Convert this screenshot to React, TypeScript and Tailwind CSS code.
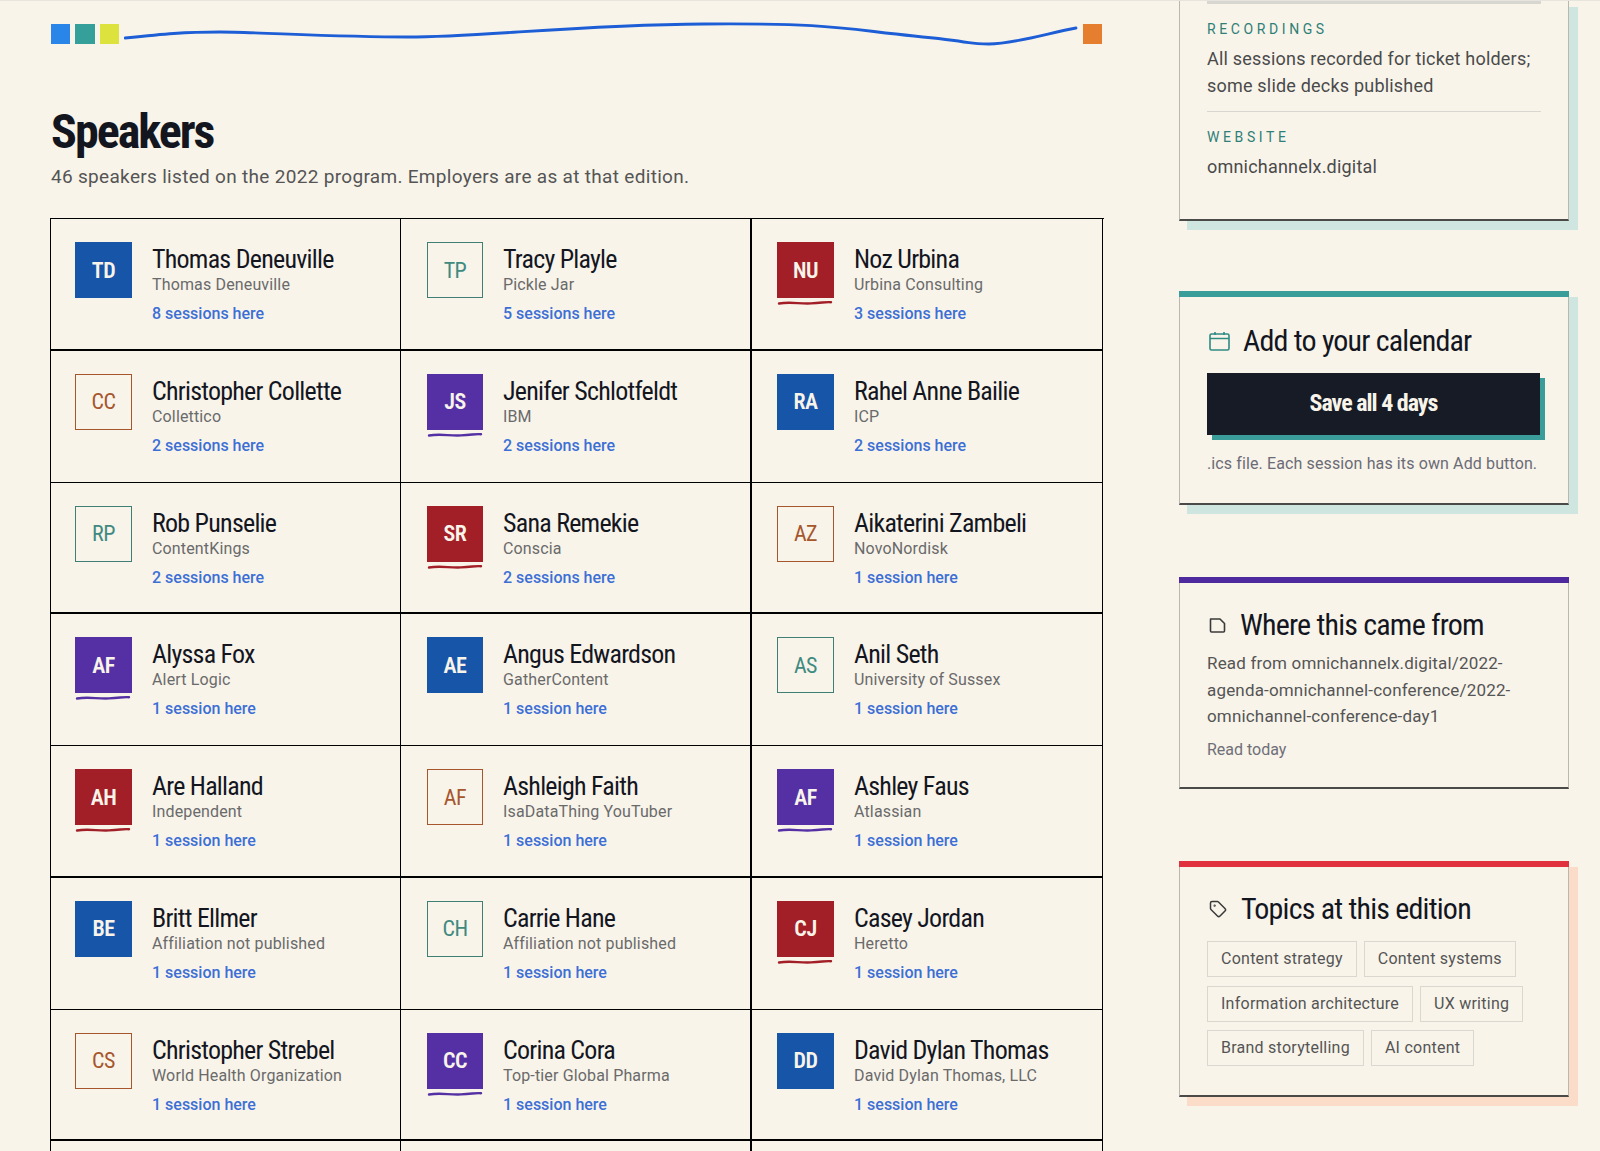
import { Tag } from "lucide-react";

type Tone = "blue" | "red" | "purple" | "teal" | "brown";

type Speaker = {
  initials: string;
  name: string;
  org: string;
  sessions: string;
  tone: Tone;
};

const speakers: Speaker[] = [
  { initials: "TD", name: "Thomas Deneuville", org: "Thomas Deneuville", sessions: "8 sessions here", tone: "blue" },
  { initials: "TP", name: "Tracy Playle", org: "Pickle Jar", sessions: "5 sessions here", tone: "teal" },
  { initials: "NU", name: "Noz Urbina", org: "Urbina Consulting", sessions: "3 sessions here", tone: "red" },
  { initials: "CC", name: "Christopher Collette", org: "Collettico", sessions: "2 sessions here", tone: "brown" },
  { initials: "JS", name: "Jenifer Schlotfeldt", org: "IBM", sessions: "2 sessions here", tone: "purple" },
  { initials: "RA", name: "Rahel Anne Bailie", org: "ICP", sessions: "2 sessions here", tone: "blue" },
  { initials: "RP", name: "Rob Punselie", org: "ContentKings", sessions: "2 sessions here", tone: "teal" },
  { initials: "SR", name: "Sana Remekie", org: "Conscia", sessions: "2 sessions here", tone: "red" },
  { initials: "AZ", name: "Aikaterini Zambeli", org: "NovoNordisk", sessions: "1 session here", tone: "brown" },
  { initials: "AF", name: "Alyssa Fox", org: "Alert Logic", sessions: "1 session here", tone: "purple" },
  { initials: "AE", name: "Angus Edwardson", org: "GatherContent", sessions: "1 session here", tone: "blue" },
  { initials: "AS", name: "Anil Seth", org: "University of Sussex", sessions: "1 session here", tone: "teal" },
  { initials: "AH", name: "Are Halland", org: "Independent", sessions: "1 session here", tone: "red" },
  { initials: "AF", name: "Ashleigh Faith", org: "IsaDataThing YouTuber", sessions: "1 session here", tone: "brown" },
  { initials: "AF", name: "Ashley Faus", org: "Atlassian", sessions: "1 session here", tone: "purple" },
  { initials: "BE", name: "Britt Ellmer", org: "Affiliation not published", sessions: "1 session here", tone: "blue" },
  { initials: "CH", name: "Carrie Hane", org: "Affiliation not published", sessions: "1 session here", tone: "teal" },
  { initials: "CJ", name: "Casey Jordan", org: "Heretto", sessions: "1 session here", tone: "red" },
  { initials: "CS", name: "Christopher Strebel", org: "World Health Organization", sessions: "1 session here", tone: "brown" },
  { initials: "CC", name: "Corina Cora", org: "Top-tier Global Pharma", sessions: "1 session here", tone: "purple" },
  { initials: "DD", name: "David Dylan Thomas", org: "David Dylan Thomas, LLC", sessions: "1 session here", tone: "blue" },
];

const toneClass: Record<Tone, string> = {
  blue: "bg-[#1655a8] text-[#f8f4ea] font-semibold",
  red: "bg-[#a31f27] text-[#f8f4ea] font-semibold",
  purple: "bg-[#5530a5] text-[#f8f4ea] font-semibold",
  teal: "border border-[#3f7f76] text-[#3f8a80] font-normal",
  brown: "border border-[#a6562c] text-[#a6562c] font-normal",
};

const narrow = "font-['Liberation_Sans_Narrow','Roboto_Condensed',sans-serif]";

function Avatar({ initials, tone, width }: { initials: string; tone: Tone; width: string }) {
  const squiggle = tone === "red" ? "#a31f27" : tone === "purple" ? "#5530a5" : null;
  return (
    <div className="relative shrink-0">
      <div className={`flex h-[56px] items-center justify-center text-[22px] tracking-[-0.5px] ${width} ${narrow} ${toneClass[tone]}`}>
        {initials}
      </div>
      {squiggle && (
        <svg className="absolute left-0 top-[57px]" width="56" height="7" viewBox="0 0 56 7" fill="none">
          <path d="M2 4.5C14 2.5 22 5 34 4.4S48 2.8 54 3.2" stroke={squiggle} strokeWidth="2.4" strokeLinecap="round" />
        </svg>
      )}
    </div>
  );
}

function Cell({ s, index }: { s?: Speaker; index: number }) {
  const row = Math.floor(index / 3);
  const col = index % 3;
  const pad = col === 0 ? "pl-[24px]" : col === 1 ? "pl-[26px]" : "pl-[25px]";
  return (
    <div
      className={`flex gap-[20px] border-black pt-[23px] ${pad} ${row % 2 === 0 ? "border-b-2" : "border-b"} ${
        col === 1 ? "border-r-2" : "border-r"
      }`}
    >
      {s && (
        <>
          <Avatar initials={s.initials} tone={s.tone} width={col === 1 ? "w-[56px]" : "w-[57px]"} />
          <div className="mt-[3px] min-w-0">
            <div className={`text-[26px] leading-[28px] tracking-[-0.76px] text-[#14161f] ${narrow}`}>{s.name}</div>
            <div className="mt-[2px] text-[16px] leading-[20px] tracking-[0.15px] text-[#6a6a6a]">{s.org}</div>
            <div className="mt-[9px] text-[16px] font-medium leading-[20px] text-[#3c6fd6]">{s.sessions}</div>
          </div>
        </>
      )}
    </div>
  );
}

function Card({
  bar,
  shadow,
  className,
  children,
}: {
  bar?: string;
  shadow?: string;
  className?: string;
  children: React.ReactNode;
}) {
  return (
    <section className={`relative ${className ?? ""}`}>
      {shadow && <div className={`absolute bottom-[-9px] left-[8px] right-[-9px] top-[6px] ${shadow}`} />}
      <div className="relative h-full border-x border-b-2 border-x-[#b9b7ae] border-b-[#4a4a48] bg-[#f8f4ea]">
        {bar && <div className={`absolute left-[-1px] right-[-1px] top-0 h-[6px] ${bar}`} />}
        {children}
      </div>
    </section>
  );
}

function Heading({ icon, gap, children }: { icon: React.ReactNode; gap: string; children: React.ReactNode }) {
  return (
    <div className={`flex items-center pl-[2px] ${gap}`}>
      {icon}
      <h2 className={`text-[30px] leading-[36px] tracking-[-0.8px] text-[#14161f] ${narrow}`}>{children}</h2>
    </div>
  );
}

const topics = [
  "Content strategy",
  "Content systems",
  "Information architecture",
  "UX writing",
  "Brand storytelling",
  "AI content",
];

export default function App() {
  return (
    <div className="h-[1151px] w-[1600px] overflow-hidden border-t border-[#e6e4dd] bg-[#f8f4ea] font-['Roboto',sans-serif]">
      <div className="flex items-start">
        <main className="ml-[50px] w-[1054px]">
          <div className="mt-[18px] flex items-center pl-[1px] pr-[2px]">
            <div className="h-[20px] w-[19px] bg-[#2a85e8]" />
            <div className="ml-[5px] h-[20px] w-[20px] bg-[#35a09a]" />
            <div className="ml-[5px] h-[20px] w-[19px] bg-[#dde23c]" />
            <svg className="mx-[5px] h-[30px] flex-1" viewBox="0 0 954 30" fill="none">
              <path
                d="M1 19C40 15 60 13 96 13S210 18 284 18 450 6 580 5 720 10 790 17 840 25 865 25 925 14 952 9"
                stroke="#1d5ed6"
                strokeWidth="2.8"
                strokeLinecap="round"
              />
            </svg>
            <div className="h-[20px] w-[19px] bg-[#e57e2e]" />
          </div>
          <h1 className={`ml-[1px] mt-[55px] text-[48px] font-bold leading-[56px] tracking-[-2px] text-[#14161f] ${narrow}`}>Speakers</h1>
          <p className="ml-[1px] mt-[5px] text-[19px] leading-[24px] tracking-[0.31px] text-[#555555]">
            46 speakers listed on the 2022 program. Employers are as at that edition.
          </p>
          <div className="mt-[29px] grid auto-rows-[131.75px] grid-cols-[350px_351px_351px] border-l border-t border-black">
            {Array.from({ length: 24 }, (_, i) => (
              <Cell key={i} s={speakers[i]} index={i} />
            ))}
          </div>
        </main>

        <aside className="ml-[75px] w-[390px]">
          <Card shadow="bg-[#cfe5df]" className="h-[220px]">
            <div className="px-[27px]">
              <div className="h-[3px] bg-[#d8d6d0]" />
              <div className="mt-[16px] text-[14px] uppercase leading-[18px] tracking-[3.6px] text-[#2f7f78]">Recordings</div>
              <p className="mt-[7px] text-[18px] leading-[27px] tracking-[0.2px] text-[#4a4a4a]">
                All sessions recorded for ticket holders; some slide decks published
              </p>
              <div className="mt-[12px] h-px bg-[#d8d6d0]" />
              <div className="mt-[16px] text-[14px] uppercase leading-[18px] tracking-[3.6px] text-[#2f7f78]">Website</div>
              <p className="mt-[9px] text-[18px] leading-[24px] tracking-[0.2px] text-[#4a4a4a]">omnichannelx.digital</p>
            </div>
          </Card>

          <Card bar="bg-[#3a9d9a]" shadow="bg-[#cfe5df]" className="mt-[70px] h-[214px]">
            <div className="px-[27px] pt-[32px]">
              <Heading
                gap="gap-[13px]"
                icon={
                  <svg className="h-[20px] w-[21px] text-[#2f8a84]" viewBox="0 0 21 20" fill="none" stroke="currentColor" strokeWidth="1.6">
                    <rect x="1" y="3" width="19" height="16" rx="1.5" />
                    <path d="M1 7.5h19M6 1v3M15 1v3" />
                  </svg>
                }
              >
                Add to your calendar
              </Heading>
              <div className={`mt-[14px] flex h-[62px] w-[333px] items-center justify-center bg-[#171b26] pb-[2px] text-[24px] font-bold tracking-[-1px] text-[#f8f4ea] shadow-[5px_5px_0_#3a9d9a] ${narrow}`}>
                Save all 4 days
              </div>
              <p className="mt-[19px] whitespace-nowrap text-[16px] leading-[20px] tracking-[0.12px] text-[#6b6b76]">
                .ics file. Each session has its own Add button.
              </p>
            </div>
          </Card>

          <Card bar="bg-[#4f2a9e]" className="mt-[72px] h-[212px]">
            <div className="px-[27px] pt-[30px]">
              <Heading
                gap="gap-[14px]"
                icon={
                  <svg className="h-[17px] w-[17px] text-[#3a3a3a]" viewBox="0 0 17 17" fill="none" stroke="currentColor" strokeWidth="1.6">
                    <path d="M1.5 2h9.5l4.5 4.5V14a1 1 0 0 1-1 1h-12a1 1 0 0 1-1-1V3a1 1 0 0 1 .5-1z" strokeLinejoin="round" />
                  </svg>
                }
              >
                Where this came from
              </Heading>
              <p className="mt-[7px] text-[17px] leading-[26.5px] tracking-[0.17px] text-[#555555]">
                Read from omnichannelx.digital/2022-
                <br />
                agenda-omnichannel-conference/2022-
                <br />
                omnichannel-conference-day1
              </p>
              <p className="mt-[10px] text-[16px] leading-[20px] text-[#6f6f78]">Read today</p>
            </div>
          </Card>

          <Card bar="bg-[#e0313f]" shadow="bg-[#fbdcc8]" className="mt-[72px] h-[236px]">
            <div className="px-[27px] pt-[30px]">
              <Heading gap="gap-[14px]" icon={<Tag className="h-[18px] w-[18px] text-[#3a3a3a]" strokeWidth={2} />}>
                Topics at this edition
              </Heading>
              <div className="mt-[14px] flex flex-wrap gap-x-[7px] gap-y-[8.5px]">
                {topics.map((t) => (
                  <span key={t} className="border border-[#d9d7cf] px-[13px] py-[7px] text-[16px] leading-[20px] tracking-[0.25px] text-[#555555]">
                    {t}
                  </span>
                ))}
              </div>
            </div>
          </Card>
        </aside>
      </div>
    </div>
  );
}
